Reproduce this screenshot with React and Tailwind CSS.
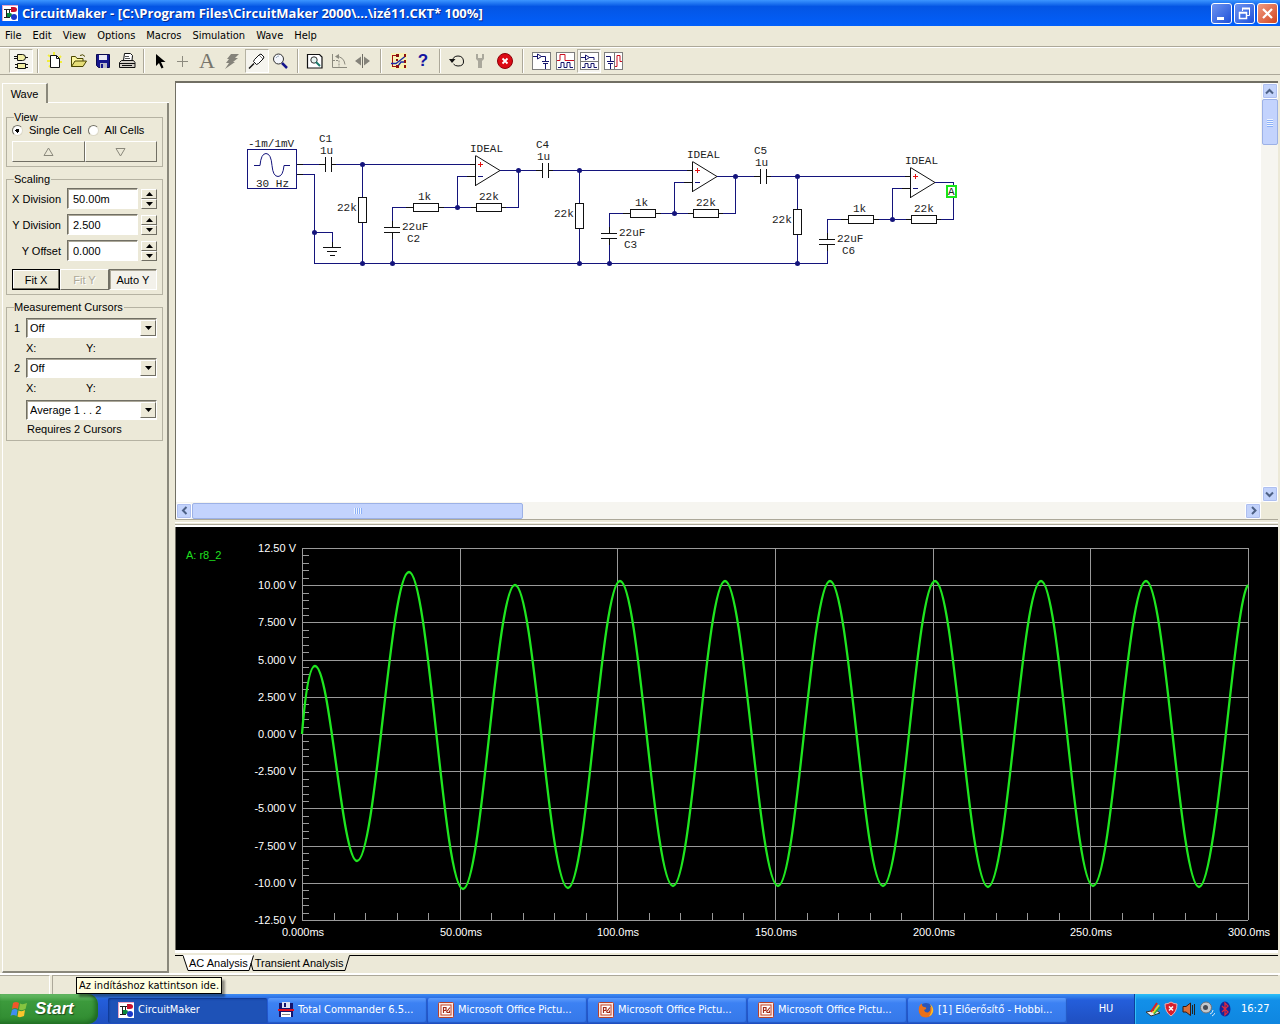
import React from "react";

const UI = "font-['DejaVu_Sans_Condensed','DejaVu_Sans',sans-serif]";

function Svg({ w = 18, h = 18, className = "", children, ...rest }) {
  return (
    <svg width={w} height={h} viewBox={`0 0 ${w} ${h}`} className={`block shrink-0 ${className}`} fill="none" aria-hidden="true" {...rest}>
      {children}
    </svg>
  );
}

function AppLogo() {
  return (
    <Svg w={16} h={16}>
      <rect width="16" height="16" fill="#fff" />
      <path d="M0 .5H16M.5 0V16" stroke="#e7a3c4" />
      <path d="M2 4.500H10M4.500 4V13M2 12.500H8M7.500 4V9" stroke="#222" />
      <path d="M9 2h3q3 0 3 2.500T12 7H9z" fill="#c8102e" />
      <path d="M5 8h3q2 0 2 2t-2 2H5z" fill="#0a8a3c" />
      <circle cx="12" cy="12" r="3" fill="#1b39c9" />
    </Svg>
  );
}

/* ---------- toolbar icons ---------- */
const GatesIcon = () => (
  <Svg>
    <path d="M5.500 2.500h5q3 0 3 3t-3 3h-5zM5.500 11.500h8v5h-8z" fill="#f3efa6" stroke="#111" />
    <path d="M2 4.500h3M2 6.500h3M13 5.500h3M3 12.500h2M3 15.500h2M14 12.500h2M14 15.500h2" stroke="#111" />
  </Svg>
);
const NewIcon = () => (
  <Svg>
    <path d="M2 3l3 2M1 9h3M8 0v3M15 4l-2 2M16 10h-2M3 15l2-2" stroke="#f2ee3a" strokeWidth="2" />
    <path d="M4.500 3.500h6l3 3v9h-9z" fill="#fff" stroke="#111" />
    <path d="M10.500 3.500v3h3" stroke="#111" />
  </Svg>
);
const OpenIcon = () => (
  <Svg>
    <path d="M1.500 14.500v-10h4l1.500 2h6v2.500" fill="#fbf6a0" stroke="#4a4600" />
    <path d="M1.500 14.500l3.500-5.500h11.500l-3.500 5.500z" fill="#e6de78" stroke="#4a4600" />
    <path d="M10 3.500q3-2 5 1" stroke="#4a4600" />
  </Svg>
);
const SaveIcon = () => (
  <Svg>
    <path d="M2.500 2.500h13v13h-11l-2-2z" fill="#16168c" stroke="#0a0a50" />
    <path d="M5 3h8v5H5z" fill="#e9e9f4" />
    <path d="M6 11h7v5H6z" fill="#b9b9c9" />
    <path d="M7 12h2v4H7z" fill="#16168c" />
  </Svg>
);
const PrintIcon = () => (
  <Svg>
    <path d="M5.500 8.500l1-7h6l2 2-.5 5" fill="#fff" stroke="#111" />
    <path d="M7 4.500h4M7 6.500h5" stroke="#555" />
    <path d="M3.500 8.500h12l1.500 2v5h-15.500v-5z" fill="#d4d0c8" stroke="#111" />
    <path d="M2 11.500h15M4 13.500h10" stroke="#111" />
  </Svg>
);
const ArrowIcon = () => (
  <Svg><path d="M4 2v12l3-3 2.500 5.500 2-1L9 10h4.500z" fill="#000" /></Svg>
);
const PlusIcon = () => (
  <Svg><path d="M6.500 4v11M1 9.500h11" stroke="#8c8a7e" /></Svg>
);
const BoltIcon = () => (
  <Svg><path d="M7 2h8l-4 4h3l-5 4h2L1 17l4-6H2l3-4H3z" fill="#85837a" /></Svg>
);
const ProbeIcon = () => (
  <Svg>
    <path d="M1 16.500l5-5" stroke="#111" strokeWidth="1.500" />
    <path d="M5.500 9.500l1-2L11 3l2-1L16 5l-1 2-4.500 4.500-2 1z" fill="#fff" stroke="#111" />
    <path d="M11 3l4 4" stroke="#777" />
  </Svg>
);
const MagnifyIcon = () => (
  <Svg>
    <circle cx="6.500" cy="7" r="5" fill="#f4f6fb" stroke="#333" />
    <path d="M4 6q1-2 3-2" stroke="#9ab" />
    <path d="M10 11l5 5" stroke="#16168c" strokeWidth="2.500" />
  </Svg>
);
const ZoomPageIcon = () => (
  <Svg>
    <path d="M1.500 2.500h12l2.500 2.500v11H1.500z" fill="#fff" stroke="#111" strokeWidth="1.200" />
    <circle cx="8" cy="8" r="3.200" fill="#e6f3f0" stroke="#333" />
    <path d="M10 10l4 4" stroke="#1a7a6a" strokeWidth="2" />
  </Svg>
);
const RotateIcon = () => (
  <Svg>
    <path d="M2.500 2v13.500H17" stroke="#8c8a7e" />
    <path d="M3 8.500h6v7" stroke="#8c8a7e" strokeDasharray="2 1" />
    <path d="M6 4.500q8 0 9 8" stroke="#8c8a7e" />
    <path d="M9 2v5L5 4.500z" fill="#8c8a7e" />
  </Svg>
);
const MirrorIcon = () => (
  <Svg>
    <path d="M8.500 2v14" stroke="#6f6d64" />
    <path d="M7 4.500v9L1 9zM10 4.500v9L16 9z" fill="#85837a" />
  </Svg>
);
const NetIcon = () => (
  <Svg>
    <rect x="1" y="1" width="16" height="16" fill="#f8f2b4" />
    <path d="M2.500 3v12M2 3.500h5M2 14.500h5" stroke="#a01010" />
    <path d="M1 11.500h5l9-7M8 14l3-4h5" stroke="#1b2aa8" strokeWidth="1.300" />
    <path d="M6 2h3v3H6zM14 2h2v3h-2zM6 7h2v2H6zM14 8h2v3h-2zM6 13h3v3H6zM14 13h2v3h-2z" fill="#8c1010" />
  </Svg>
);
const UndoIcon = () => (
  <Svg>
    <path d="M4.500 9Q5 4 10 4t5.500 5T10 14q-3 0-4.500-2" stroke="#111" />
    <path d="M1 7h6.500L4 11z" fill="#111" />
  </Svg>
);
const WrenchIcon = () => (
  <Svg><path d="M4 2v5l2 2v7h4V9l2-2V2h-2v4H6V2z" fill="#aaa89c" /></Svg>
);
const StopIcon = () => (
  <Svg>
    <circle cx="9" cy="9" r="7.500" fill="#dc0a14" stroke="#8c0008" />
    <path d="M6.500 6.500l5 5M11.500 6.500l-5 5" stroke="#fff" strokeWidth="1.800" />
  </Svg>
);
const Frame = ({ children }) => (
  <Svg w={19} h={18}>
    <rect x=".5" y=".5" width="18" height="17" fill="#fff" stroke="#7d7d7d" />
    {children}
  </Svg>
);
const SchematicIcon = () => (
  <Frame>
    <path d="M1 4.500h4M9 4.500h4.500V9M10 9.500h7M11 11.500h5M13.500 12v5" stroke="#15156e" />
    <path d="M5.500 2v5l4-2.500z" stroke="#15156e" />
  </Frame>
);
const WavesIcon = () => (
  <Frame>
    <path d="M1 8.500h3v-6h5v6h9" stroke="#cc1020" />
    <path d="M2 15.500h3v-5h3v5h3v-5h3v5h3" stroke="#15156e" />
  </Frame>
);
const SplitHIcon = () => (
  <Frame>
    <path d="M1 5.500h4M9 5.500h5V8M5.500 3v5l4-2.500z" stroke="#15156e" />
    <path d="M1 9.500h17" stroke="#777" />
    <path d="M2 15.500h3v-4h3v4h3v-4h3v4h3" stroke="#15156e" />
  </Frame>
);
const SplitVIcon = () => (
  <Frame>
    <path d="M2 4.500h4.500V9M3 9.500h7M4 11.500h5M6.500 12v5" stroke="#15156e" />
    <path d="M10.500 1v16" stroke="#777" />
    <path d="M11 14.500h2v-11h3v6h2" stroke="#cc1020" />
  </Frame>
);

function Tool({ label, pressed, children }) {
  return (
    <button
      type="button"
      aria-label={label}
      aria-pressed={pressed}
      className={`flex h-6 w-6 shrink-0 items-center justify-center border ${
        pressed ? "border-[#b5b2a2] border-r-white border-b-white bg-[#f5f4ee]" : "border-transparent"
      }`}
    >
      {children}
    </button>
  );
}
const Sep = ({ wide }) => (
  <span className={`flex h-6 shrink-0 justify-center ${wide ? "w-3" : "w-2.5"}`}>
    <span className="w-0.5 border-l border-[#aca899] border-r border-r-white" />
  </span>
);

function TitleBar() {
  const base = "flex h-[21px] w-[21px] items-center justify-center rounded-[3px] border border-white";
  return (
    <header className="flex h-[26px] shrink-0 items-center gap-1 bg-linear-to-b from-[#3c95ff] via-[#0455e4] via-25% to-[#0260fb] pr-0.5 pl-0.5">
      <AppLogo />
      <h1 className="flex-1 truncate font-['Open_Sans','Noto_Sans',sans-serif] text-[13px] leading-[26px] font-bold text-white [text-shadow:1px_1px_#0a2a8c]">
        CircuitMaker - [C:\Program Files\CircuitMaker 2000\...\izé11.CKT* 100%]
      </h1>
      <div className="flex gap-0.5">
        <button type="button" aria-label="Minimize" className={`${base} bg-linear-to-br from-[#6e93f0] to-[#1f4fd8]`}>
          <Svg w={15} h={15}><path d="M3 11h7v3H3z" fill="#fff" /></Svg>
        </button>
        <button type="button" aria-label="Restore" className={`${base} bg-linear-to-br from-[#6e93f0] to-[#1f4fd8]`}>
          <Svg w={15} h={15}>
            <path d="M5.500 5V2.500h7v7H10" stroke="#fff" />
            <path d="M5 2.500h8" stroke="#fff" strokeWidth="2" />
            <path d="M2.500 6.500h7v6h-7zM2 7h8" stroke="#fff" strokeWidth="1.500" />
          </Svg>
        </button>
        <button type="button" aria-label="Close" className={`${base} bg-linear-to-br from-[#f09a80] to-[#d0421a]`}>
          <Svg w={15} h={15}><path d="M3 3l9 9M12 3l-9 9" stroke="#fff" strokeWidth="2.200" /></Svg>
        </button>
      </div>
    </header>
  );
}

function MenuBar() {
  return (
    <nav className="flex h-[21px] shrink-0 items-center gap-[11px] border-b border-[#aca899] pl-[5px] text-[11px]">
      {["File", "Edit", "View", "Options", "Macros", "Simulation", "Wave", "Help"].map((m) => (
        <button type="button" key={m} className="leading-4">{m}</button>
      ))}
    </nav>
  );
}

function ToolBar() {
  return (
    <div role="toolbar" aria-label="Main" className="flex h-7 shrink-0 items-center border-t border-b border-t-white border-b-[#aca899] pl-[9px]">
      <Tool label="Digital mode" pressed><GatesIcon /></Tool>
      <Sep />
      <Tool label="New"><NewIcon /></Tool>
      <Tool label="Open"><OpenIcon /></Tool>
      <Tool label="Save"><SaveIcon /></Tool>
      <Tool label="Print"><PrintIcon /></Tool>
      <Sep />
      <Tool label="Arrow"><ArrowIcon /></Tool>
      <Tool label="Wire"><PlusIcon /></Tool>
      <Tool label="Text"><span className="pr-1 font-['Liberation_Serif',serif] text-[22px] leading-5 text-[#77756c]">A</span></Tool>
      <Tool label="Delete"><BoltIcon /></Tool>
      <Tool label="Probe" pressed><ProbeIcon /></Tool>
      <Tool label="Zoom"><MagnifyIcon /></Tool>
      <Sep />
      <Tool label="Fit page"><ZoomPageIcon /></Tool>
      <Tool label="Rotate"><RotateIcon /></Tool>
      <Tool label="Mirror"><MirrorIcon /></Tool>
      <Sep wide />
      <Tool label="Net"><NetIcon /></Tool>
      <Tool label="Help"><span className="font-['Liberation_Sans',sans-serif] text-[17px] leading-5 font-bold text-[#1414a0]">?</span></Tool>
      <Sep />
      <Tool label="Reset"><UndoIcon /></Tool>
      <Tool label="Setup"><WrenchIcon /></Tool>
      <Tool label="Stop"><StopIcon /></Tool>
      <Sep wide />
      <Tool label="Schematic only"><SchematicIcon /></Tool>
      <Tool label="Waves only"><WavesIcon /></Tool>
      <Tool label="Split horizontally" pressed><SplitHIcon /></Tool>
      <Tool label="Split vertically"><SplitVIcon /></Tool>
    </div>
  );
}

/* ---------- side panel ---------- */
const RAISED = "border border-t-white border-l-white border-r-[#716f64] border-b-[#716f64]";
const SUNKEN = "border border-t-[#716f64] border-l-[#716f64] border-r-white border-b-white shadow-[inset_1px_1px_0_#aca899]";

function Group({ title, className = "", children }) {
  return (
    <fieldset className={`mr-1 ml-[3px] border border-[#b5b2a2] px-[5px] ${className}`}>
      <legend className="ml-0.5 pr-px leading-3">{title}</legend>
      {children}
    </fieldset>
  );
}

function Field({ id, label, value }) {
  return (
    <div className="flex items-center">
      <label htmlFor={id} className="w-[49px] text-right whitespace-nowrap">{label}</label>
      <input id={id} defaultValue={value} className={`ml-1.5 h-[21px] w-[71px] bg-white pl-[5px] ${SUNKEN}`} />
      <span className="ml-[3px] flex h-5 w-4 flex-col">
        {["up", "down"].map((d) => (
          <button type="button" key={d} aria-label={`${label} ${d}`} className={`flex flex-1 items-center justify-center bg-[#ece9d8] ${RAISED}`}>
            <Svg w={7} h={4}><path d={d === "up" ? "M0 4h7L3.500 0z" : "M0 0h7L3.500 4z"} fill="#000" /></Svg>
          </button>
        ))}
      </span>
    </div>
  );
}

function Combo({ id, label, value }) {
  return (
    <span className={`relative flex h-5 flex-1 bg-white ${SUNKEN}`}>
      <select id={id} aria-label={label} defaultValue={value} className="h-full w-full appearance-none bg-transparent pl-[3px] leading-[18px] whitespace-pre">
        <option>{value}</option>
      </select>
      <span className={`pointer-events-none absolute inset-y-px right-0 flex w-4 items-center justify-center bg-[#ece9d8] ${RAISED}`}>
        <Svg w={7} h={4}><path d="M0 0h7L3.500 4z" fill="#000" /></Svg>
      </span>
    </span>
  );
}

const Xy = () => (
  <div className="flex h-5 items-center pl-[14px]">
    <span className="w-[60px]">X:</span>
    <span>Y:</span>
  </div>
);

function Radio({ label, checked }) {
  return (
    <label className="flex items-center gap-1.5">
      <input
        type="radio"
        name="cells"
        defaultChecked={checked}
        className="h-[11px] w-[11px] appearance-none rounded-full border border-[#716f64] border-r-[#dcd9c8] border-b-[#dcd9c8] bg-white checked:bg-[radial-gradient(#000_0_2px,#fff_2px)]"
      />
      {label}
    </label>
  );
}

function SidePanel() {
  return (
    <aside className="flex w-[175px] shrink-0 flex-col pt-0.5 pr-1.5 pl-0.5 font-['Liberation_Sans',sans-serif] text-[11px] leading-[14px]">
      <div className="flex">
        <button type="button" className="h-5 w-[46px] border-t border-r-2 border-l border-white border-r-[#8a887b]">Wave</button>
        <span className="flex-1 border-b border-white" />
      </div>
      <div className="flex-1 border-r-2 border-b-2 border-l border-r-[#8a887b] border-b-[#8a887b] border-l-white">
        <Group title="View" className="mt-2 pb-1">
          <div className="flex gap-1.5">
            <Radio label="Single Cell" checked />
            <Radio label="All Cells" />
          </div>
          <div className="mt-1 flex">
            <button type="button" aria-label="Previous cell" className={`flex h-[21px] flex-1 items-center justify-center ${RAISED}`}>
              <Svg w={11} h={10}><path d="M1 8.500h9L5.500 1z" stroke="#8a887b" /></Svg>
            </button>
            <button type="button" aria-label="Next cell" className={`flex h-[21px] flex-1 items-center justify-center ${RAISED}`}>
              <Svg w={11} h={10}><path d="M1 1.500h9L5.500 9z" stroke="#8a887b" /></Svg>
            </button>
          </div>
        </Group>
        <Group title="Scaling" className="mt-1.5 pb-1">
          <div className="flex flex-col gap-[5px] pt-[3px]">
            <Field id="xdiv" label="X Division" value="50.00m" />
            <Field id="ydiv" label="Y Division" value="2.500" />
            <Field id="yoff" label="Y Offset" value="0.000" />
          </div>
          <div className="mt-2 flex h-[21px]">
            <button type="button" className="flex-1 border border-black shadow-[inset_-1px_-1px_0_#716f64,inset_1px_1px_0_#fff]">Fit X</button>
            <button type="button" disabled className={`flex-1 text-[#aca899] [text-shadow:1px_1px_#fff] ${RAISED}`}>Fit Y</button>
            <button type="button" aria-pressed="true" className={`flex-1 bg-[#f3f1ea] ${SUNKEN}`}>Auto Y</button>
          </div>
        </Group>
        <Group title="Measurement Cursors" className="mt-1.5 pb-1">
          <div className="mt-[5px] flex items-center">
            <label htmlFor="c1" className="w-[14px] pl-0.5">1</label>
            <Combo id="c1" value="Off" />
          </div>
          <Xy />
          <div className="flex items-center">
            <label htmlFor="c2" className="w-[14px] pl-0.5">2</label>
            <Combo id="c2" value="Off" />
          </div>
          <Xy />
          <div className="mt-0.5 flex pl-[14px]">
            <Combo id="avg" label="Measurement" value="Average  1 . . 2" />
          </div>
          <p className="mt-0.5 pl-[15px]">Requires 2 Cursors</p>
        </Group>
      </div>
    </aside>
  );
}

/* ---------- schematic ---------- */
const BLUE = "#14147c";
function Wire({ d, black }) {
  return <path d={d} stroke={black ? "#111" : BLUE} shapeRendering="crispEdges" />;
}
const Dot = ({ x, y }) => <circle cx={x + 0.5} cy={y + 0.5} r="2.500" fill={BLUE} />;
const T = ({ x, y, children }) => <text x={x} y={y} fill="#222">{children}</text>;

function Stage({ dx, dy, cap, fb, inX, last }) {
  const bottom = 263.5 - dy;
  return (
    <g transform={`translate(${dx} ${dy})`}>
      <Wire black d="M319 164.500H326M325.500 157V172M331.500 157V172M332 164.500H336" />
      <Wire d={`M${inX} 164.500H319M336 164.500H470M362.500 164V197M362.500 223V${bottom}`} />
      <Wire black d="M358.500 197.500h8v25h-8zM470 164.500h5M467 176.500h8M475.500 155.500V185.500" />
      <path d="M475.500 155.500L500 170.500L475.500 185.500" stroke="#111" />
      <path d="M478 164h5v1h-5zM480 162h1v5h-1z" fill="#e01010" />
      <path d="M478 176h5v1h-5z" fill={BLUE} />
      <Wire d="M467 176.500H457.500V207.500H471M444 207.500H457M406 207.500H392.500V221" />
      <Wire black d="M471 207.500h5M476.500 203.500h25v8h-25zM502 207.500h4M438 207.500h6M413.500 203.500h25v8h-25zM406 207.500h7M392.500 221V227M384 227.500h16M384 232.500h16M392.500 233v6" />
      <Wire d={`M392.500 239V${bottom}M500 170.500H518.500${last ? "V174M518.500 186" : ""}V207.500H506`} />
      <Dot x={362} y={164} />
      <Dot x={457} y={207} />
      <Dot x={362} y={bottom - 0.5} />
      {!last && <Dot x={518} y={170} />}
      {!last && <Dot x={392} y={bottom - 0.5} />}
      <T x={319} y={142}>{cap}</T>
      <T x={320} y={154}>1u</T>
      <T x={337} y={211}>22k</T>
      <T x={418} y={200}>1k</T>
      <T x={479} y={200}>22k</T>
      <T x={470} y={152}>IDEAL</T>
      <T x={402} y={230}>22uF</T>
      <T x={407} y={242}>{fb}</T>
    </g>
  );
}

function Schematic() {
  return (
    <svg width="1084" height="418" viewBox="176 83 1084 418" fill="none" className="block font-['Liberation_Mono',monospace] text-[11px]" role="img" aria-label="Three stage amplifier schematic">
      <rect x="247.500" y="149.500" width="49" height="39" stroke={BLUE} />
      <path d="M254 165.500H260Q261 153.500 266 153.500T272 165.500Q273 176.500 278 176.500T284 165.500H290" stroke={BLUE} />
      <T x={248} y={147}>-1m/1mV</T>
      <T x={256} y={187}>30 Hz</T>
      <Wire black d="M297 164.500h6M297 174.500h6M323 247.500h18M327 251.500h10M330 255.500h5M332.500 242v5" />
      <Wire d="M303 174.500H314.500V263.500H828M314 232.500H332.500V242" />
      <Dot x={314} y={232} />
      <Stage dx={0} dy={0} cap="C1" fb="C2" inX={303} />
      <Stage dx={217} dy={6} cap="C4" fb="C3" inX={301} />
      <Stage dx={435} dy={12} cap="C5" fb="C6" inX={300} last />
      <rect x="947" y="186" width="9" height="11" fill="#fff" stroke="#19e619" strokeWidth="2" />
      <text x="948" y="195" fill="#222">A</text>
    </svg>
  );
}

function ScrollArrow({ label, d }) {
  return (
    <button type="button" aria-label={label} className="flex h-4 w-4 shrink-0 items-center justify-center rounded-xs border border-white bg-[#c3d3fb] shadow-[inset_0_0_0_1px_#aebff0]">
      <Svg w={9} h={9}><path d={d} stroke="#4d6185" strokeWidth="2" /></Svg>
    </button>
  );
}

function SchematicPane() {
  return (
    <section className="flex min-h-0 flex-[436] flex-col border-t-2 border-l border-[#716f64] bg-white">
      <div className="flex min-h-0 flex-1">
        <div className="min-w-0 flex-1 overflow-hidden"><Schematic /></div>
        <div className="flex w-[17px] shrink-0 flex-col items-center bg-[#f6f5f0]">
          <ScrollArrow label="Scroll up" d="M1 6.500L4.500 3L8 6.500" />
          <div className="flex h-[46px] w-4 flex-col items-center justify-center gap-px rounded-xs border border-[#9cb1e6] bg-[#c3d3fd]">
            {[0, 1, 2, 3].map((i) => <span key={i} className="h-px w-1.5 bg-[#eef4fe] shadow-[0_1px_0_#8cb0f8]" />)}
          </div>
          <span className="flex-1" />
          <ScrollArrow label="Scroll down" d="M1 2.500L4.500 6L8 2.500" />
        </div>
      </div>
      <div className="flex h-[17px] shrink-0 items-center bg-[#f6f5f0]">
        <ScrollArrow label="Scroll left" d="M6.500 1L3 4.500L6.500 8" />
        <div className="flex h-4 w-[30%] items-center justify-center gap-px rounded-xs border border-[#9cb1e6] bg-[#c3d3fd]">
          {[0, 1, 2, 3].map((i) => <span key={i} className="h-1.5 w-px bg-[#eef4fe] shadow-[1px_0_0_#8cb0f8]" />)}
        </div>
        <span className="flex-1" />
        <ScrollArrow label="Scroll right" d="M3 1L6.500 4.500L3 8" />
        <span className="h-full w-[17px] bg-[#ece9d8]" />
      </div>
    </section>
  );
}

/* ---------- oscilloscope ---------- */
const X0 = 302, X1 = 1248, Y0 = 548, Y1 = 920;
const EXTREMA = [
  [315, 666], [357, 861], [409, 572], [463, 889], [515, 585], [568, 888], [620, 581], [673, 886], [725, 581], [778, 886],
  [830, 581], [883, 886], [935, 581], [988, 887], [1041, 581], [1093, 886], [1146, 581], [1199, 887],
];
const TRACE = EXTREMA.reduce((d, [x, y], i) => {
  if (i === 0) return `M302 734C305 697 309 666 ${x} ${y}`;
  const [px, py] = EXTREMA[i - 1];
  const k = (x - px) * 0.3642;
  return `${d}C${px + k} ${py} ${x - k} ${y} ${x} ${y}`;
}, "") + "C1217 887 1234 600 1248 585";

const VOLTS = ["12.50 V", "10.00 V", "7.500 V", "5.000 V", "2.500 V", "0.000 V", "-2.500 V", "-5.000 V", "-7.500 V", "-10.00 V", "-12.50 V"];
const TIMES = ["0.000ms", "50.00ms", "100.0ms", "150.0ms", "200.0ms", "250.0ms", "300.0ms"];

function Scope() {
  const stepY = (Y1 - Y0) / 10;
  const stepX = (X1 - X0) / 6;
  return (
    <svg width="1102" height="422" viewBox="176 527 1102 422" className="block font-['Liberation_Sans',sans-serif] text-[11px]" fill="none" role="img" aria-label="Transient analysis of r8_2">
      <g stroke="#9a9a9a" shapeRendering="crispEdges">
        {VOLTS.map((v, i) => <path key={v} d={`M${X0} ${Math.round(Y0 + i * stepY) + 0.5}H${X1}`} />)}
        {TIMES.map((t, i) => <path key={t} d={`M${Math.round(X0 + i * stepX) + 0.5} ${Y0}V${Y1}`} />)}
        {Array.from({ length: 51 }, (_, i) => <path key={i} d={`M${X0} ${Math.round(Y0 + (i * stepY) / 5) + 0.5}h7`} />)}
        {Array.from({ length: 31 }, (_, i) => <path key={i} d={`M${Math.round(X0 + (i * stepX) / 5) + 0.5} ${Y1}v-7`} />)}
      </g>
      <path d={TRACE} stroke="#1fe620" strokeWidth="2.300" />
      <g fill="#fff" textAnchor="end">
        {VOLTS.map((v, i) => <text key={v} x="296" y={Math.round(Y0 + i * stepY) + 4}>{v}</text>)}
      </g>
      <g fill="#fff" textAnchor="middle">
        {TIMES.map((t, i) => <text key={t} x={Math.round(X0 + i * stepX) + 1} y="936">{t}</text>)}
      </g>
      <text x="186" y="559" fill="#1fe01f">A: r8_2</text>
    </svg>
  );
}

function AnalysisTabs() {
  return (
    <div className="flex h-[23px] shrink-0 border-t-[3px] border-white bg-[#ece9d8] pt-0.5 font-['Liberation_Sans',sans-serif] text-[11px] leading-[14px]">
      <span className="w-2 border-t border-black" />
      <Svg w={6} h={16}><path d="M0 0L5 15.500H6V0z" fill="#fff" /><path d="M0 .5L5 15.500H6" stroke="#000" /></Svg>
      <button type="button" className="h-4 border-b border-black bg-white whitespace-nowrap">AC Analysis</button>
      <Svg w={7} h={16}>
        <path d="M0 0H5L1 15.500H0z" fill="#fff" />
        <path d="M0 15.500H1L5.500 .5M3 8l2 7.500H7" stroke="#000" />
      </Svg>
      <button type="button" className="h-4 border-b border-black whitespace-nowrap">Transient Analysis</button>
      <Svg w={6} h={16}><path d="M0 15.500H1L5.500 .5H6" stroke="#000" /></Svg>
      <span className="flex-1 border-t border-black" />
    </div>
  );
}

/* ---------- taskbar ---------- */
const OfficeIcon = () => (
  <Svg w={16} h={16}>
    <rect x=".5" y=".5" width="15" height="15" rx="1" fill="#fbe6df" stroke="#b8402a" />
    <rect x="3" y="3" width="10" height="10" fill="#fff" stroke="#c0432b" />
    <path d="M5.500 11V5.500h2.500v3h-2" stroke="#a52a18" strokeWidth="1.200" />
    <path d="M8 10.500l4-5M9 10.500h2.500v-2" stroke="#a52a18" strokeWidth="1.200" />
  </Svg>
);
const FloppyIcon = () => (
  <Svg w={16} h={16}>
    <path d="M1 1h14v14H1z" fill="#14146e" />
    <path d="M4 0h8v6H4z" fill="#dfe3f2" /><path d="M6 1h2v4H6z" fill="#14146e" />
    <path d="M0 7h16v2H0z" fill="#e01020" />
    <path d="M3 10h10v5H3z" fill="#fff" /><path d="M4 12.500h8" stroke="#888" />
  </Svg>
);
const FirefoxIcon = () => (
  <Svg w={16} h={16}>
    <circle cx="8" cy="8" r="7" fill="#2a56b8" />
    <path d="M1 5Q2 2 4 1.500Q3.500 4 6 5Q9 5 8 7L6 8Q7 11 10 10.500Q13 9 12 5Q15 5 15 8Q15 15 8 15.500Q1 15 .7 8.500z" fill="#e8701a" />
    <path d="M12 2Q16 5 15 10Q14 13 11 14.500Q14 10 13.500 6z" fill="#fbc02d" />
  </Svg>
);

function Task({ icon, active, children }) {
  return (
    <button
      type="button"
      className={`flex h-[25px] max-w-[159px] min-w-0 flex-1 items-center gap-1 rounded-xs pl-2.5 text-left text-[11px] text-white ${
        active ? "bg-[#1e52b7] shadow-[inset_1px_1px_2px_#0d3690]" : "bg-linear-to-b from-[#5d9bfb] via-[#3c81f3] via-20% to-[#3577e8] shadow-[inset_-1px_-1px_1px_#2458c4]"
      }`}
    >
      {icon}
      <span className="truncate">{children}</span>
    </button>
  );
}

function Taskbar() {
  return (
    <footer className="flex h-[30px] shrink-0 items-center bg-linear-to-b from-[#3f8cf3] via-[#245edb] via-20% to-[#1f4fc0]">
      <div className="relative h-full shrink-0">
        <button type="button" className="flex h-full w-[98px] items-center gap-1.5 rounded-r-[10px] bg-linear-to-b from-[#6cc06a] via-[#3c9a3c] via-25% to-[#2f8a30] pl-2.5 shadow-[inset_-3px_-2px_4px_#1f6a22]">
          <Svg w={19} h={18}>
            <path d="M3 3Q6 1 9 3L8 9Q5 7 2 9z" fill="#f0562a" />
            <path d="M10 3.500Q13 5 17 3L15.500 9Q12 11 9 9.500z" fill="#86c440" />
            <path d="M2 10Q5 8 7.500 10L6.500 16Q3 14 .5 16z" fill="#3f8df0" />
            <path d="M8.500 10.500Q12 12 15 10L14 16Q10 18 7.500 16.500z" fill="#fbc52d" />
          </Svg>
          <span className="font-['Liberation_Sans',sans-serif] text-[17px] leading-5 font-bold text-white italic [text-shadow:1px_1px_1px_#1c4a1c]">Start</span>
        </button>
        <div role="tooltip" className="absolute bottom-full left-[76px] border border-black bg-[#ffffe1] px-0.5 text-[11px] leading-[15px] whitespace-nowrap shadow-[3px_3px_2px_rgba(0,0,0,0.4)]">
          Az indításhoz kattintson ide.
        </div>
      </div>
      <div className="mt-0.5 flex min-w-0 flex-1 gap-px pl-2.5">
        <Task active icon={<AppLogo />}>CircuitMaker</Task>
        <Task icon={<FloppyIcon />}>Total Commander 6.5...</Task>
        <Task icon={<OfficeIcon />}>Microsoft Office Pictu...</Task>
        <Task icon={<OfficeIcon />}>Microsoft Office Pictu...</Task>
        <Task icon={<OfficeIcon />}>Microsoft Office Pictu...</Task>
        <Task icon={<FirefoxIcon />}>[1] Előerősítő - Hobbi...</Task>
      </div>
      <button type="button" className="w-14 shrink-0 text-[11px] text-white">HU</button>
      <div className="flex h-full w-[146px] shrink-0 items-center gap-0.5 border-l border-[#0d3f9c] bg-linear-to-b from-[#2cc0f8] via-[#1290e9] via-20% to-[#0f86e0] pl-2.5 text-white shadow-[inset_1px_0_0_#35c0f5]">
        <Svg w={16} h={16}>
          <path d="M1 11l5 4 9-3-4-3z" fill="#eee" stroke="#333" />
          <path d="M6 11L12 2" stroke="#e02020" strokeWidth="2" /><path d="M8 12L14 4" stroke="#f2d21c" strokeWidth="2" /><path d="M9 13l6-7" stroke="#2fb03c" strokeWidth="1.500" />
        </Svg>
        <Svg w={16} h={16}>
          <path d="M8 1Q11 3 14 3Q14 11 8 15Q2 11 2 3Q5 3 8 1z" fill="#d81e2c" stroke="#f3b0b0" />
          <path d="M6 5.500l4 4M10 5.500l-4 4" stroke="#fff" strokeWidth="1.500" />
        </Svg>
        <Svg w={16} h={16}>
          <path d="M2 5.500h3L9.500 2v12.500L5 11H2z" fill="#d8703a" stroke="#3a1a0c" />
          <path d="M11.500 4v9M13.500 3v11" stroke="#222" />
        </Svg>
        <Svg w={16} h={16}>
          <circle cx="7" cy="6.500" r="5.500" fill="#c3c7cc" stroke="#6a7078" /><circle cx="6.500" cy="6.500" r="2.500" fill="#444b55" />
          <path d="M11 13q3-1 3-4M13 15q2-1 3-3" stroke="#dbe8f5" />
        </Svg>
        <Svg w={16} h={16}>
          <ellipse cx="8" cy="8" rx="5.500" ry="7.500" fill="#14289c" />
          <path d="M5 5l6 6-3 3V2l3 3-6 6" stroke="#e0283c" strokeWidth="1.300" />
        </Svg>
        <time className="ml-1.5 text-[11px]">16:27</time>
      </div>
    </footer>
  );
}

export default function App() {
  return (
    <div className={`flex h-screen flex-col overflow-hidden bg-[#ece9d8] text-[11px] text-black ${UI}`}>
      <TitleBar />
      <MenuBar />
      <ToolBar />
      <main className="flex min-h-0 flex-1 pt-1.5 pr-0.5">
        <SidePanel />
        <div className="flex min-w-0 flex-1 flex-col">
          <SchematicPane />
          <div className="h-2 shrink-0 border-t border-b-2 border-[#aca899] border-b-white">
            <div className="mt-0.5 h-[3px] border-t border-b border-white border-b-[#aca899]" />
          </div>
          <section className="min-h-0 flex-[423] overflow-hidden border-l border-[#716f64] bg-black"><Scope /></section>
          <AnalysisTabs />
        </div>
      </main>
      <div className="flex h-[21px] shrink-0 gap-0.5 border-t-2 border-white pr-0.5">
        <span className="w-[50px] border-t border-r border-[#aca899] border-r-white" />
        <span className="flex-1 border-t border-l border-[#aca899]" />
      </div>
      <Taskbar />
    </div>
  );
}
